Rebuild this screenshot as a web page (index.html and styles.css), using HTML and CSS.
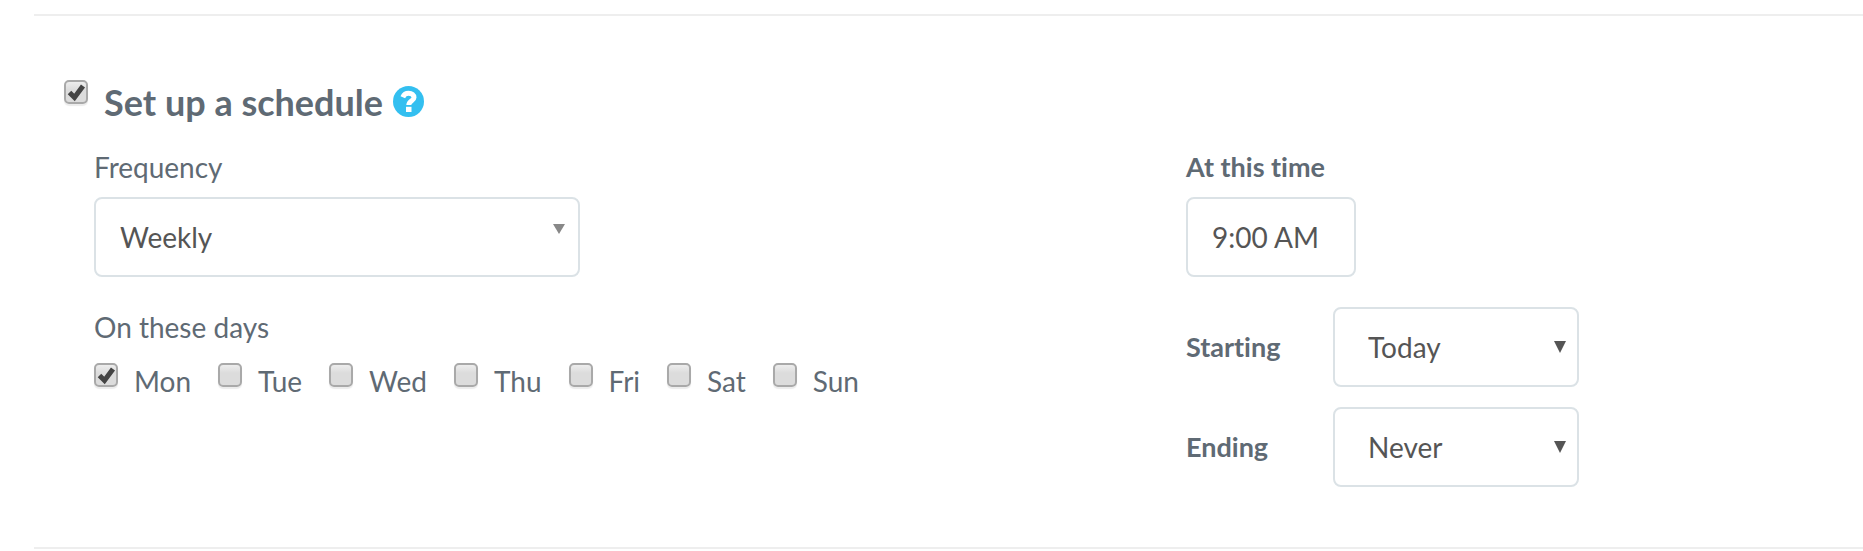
FILE: index.html
```
<!DOCTYPE html>
<html lang="en">
<head>
    <meta charset="utf-8">
    <title>Schedule</title>
    <link rel="stylesheet" href="styles.css">
</head>
<body>
    <form class="schedule">
        <div class="schedule-header">
            <input type="checkbox" id="enableSchedule" checked>
            <h2><label for="enableSchedule">Set up a schedule</label></h2>
            <button type="button" class="help-btn" aria-label="Help">
                <svg viewBox="0 0 31 31" aria-hidden="true">
                    <circle cx="15.5" cy="15.5" r="15.5" fill="#33bff0"/>
                    <path d="M9.800 11.200C11 8.400 12.800 7.300 15.600 7.300C18.900 7.300 21 9 21 11.500C21 14.700 15.800 14.800 15.800 19" fill="none" stroke="#fff" stroke-width="5"/>
                    <rect x="13" y="20.800" width="5.500" height="5.200" fill="#fff"/>
                </svg>
            </button>
        </div>

        <div class="schedule-body">
            <div class="col">
                <div class="field">
                    <label for="frequency">Frequency</label>
                    <select id="frequency" class="control frequency">
                        <option>Daily</option>
                        <option selected>Weekly</option>
                        <option>Monthly</option>
                    </select>
                </div>
                <fieldset class="field">
                    <legend>On these days</legend>
                    <div class="days">
                        <label><input type="checkbox" name="day" checked>Mon</label>
                        <label><input type="checkbox" name="day">Tue</label>
                        <label><input type="checkbox" name="day">Wed</label>
                        <label><input type="checkbox" name="day">Thu</label>
                        <label><input type="checkbox" name="day">Fri</label>
                        <label><input type="checkbox" name="day">Sat</label>
                        <label><input type="checkbox" name="day">Sun</label>
                    </div>
                </fieldset>
            </div>

            <div class="col col-time">
                <div class="field">
                    <label for="time">At this time</label>
                    <input type="text" id="time" class="control time" value="9:00 AM">
                </div>
                <div class="field-row">
                    <label for="starting">Starting</label>
                    <select id="starting" class="control range">
                        <option>Today</option>
                        <option>On date</option>
                    </select>
                </div>
                <div class="field-row">
                    <label for="ending">Ending</label>
                    <select id="ending" class="control range">
                        <option>Never</option>
                        <option>On date</option>
                    </select>
                </div>
            </div>
        </div>
    </form>
</body>
</html>
```
FILE: styles.css
```
* {
    box-sizing: border-box;
}
body {
    margin: 0;
    padding: 14px 0 0 34px;
    background: #fff;
    color: #5f6a74;
    font-family: Lato, "Liberation Sans", sans-serif;
    font-size: 28px;
    font-variant-ligatures: none;
    line-height: 36px;
}
.schedule {
    border-top: 2px solid #eee;
    border-bottom: 2px solid #eee;
    padding: 62px 0 60px 30px;
}
.schedule-header {
    display: flex;
    align-items: flex-start;
    padding-top: 2px;
}
.schedule-header h2 {
    margin: 0 10px 0 16px;
    font-size: 36px;
    font-weight: 700;
    line-height: 44px;
}
.help-btn {
    width: 31px;
    height: 31px;
    margin-top: 6px;
    padding: 0;
    border: none;
    background: none;
    cursor: pointer;
}
.help-btn svg {
    display: block;
}
.schedule-body {
    display: grid;
    grid-template-columns: 1092fr 677fr;
    padding: 25px 0 0 30px;
}
.field {
    display: flex;
    flex-direction: column;
    align-items: flex-start;
    gap: 12px;
    margin: 0 0 30px;
    padding: 0;
    border: none;
}
.col .field + .field {
    margin-top: 32px;
}
legend {
    padding: 0;
}
.field-row {
    display: flex;
    align-items: center;
    margin-bottom: 20px;
}
.field-row:last-child {
    margin-bottom: 0;
}
.field-row label {
    width: 147px;
}
.col-time label {
    font-size: 27px;
    font-weight: 700;
}
.control {
    height: 80px;
    border: 2px solid #dbe2e6;
    border-radius: 8px;
    background-color: #fff;
    color: #555;
    font: inherit;
    padding: 0 24px;
}
select.control {
    appearance: none;
    background-repeat: no-repeat;
}
.frequency {
    width: 486px;
    background-image: url("data:image/svg+xml,%3Csvg xmlns='http://www.w3.org/2000/svg' width='12' height='10'%3E%3Cpath d='M0 0h12L6 10z' fill='%23888'/%3E%3C/svg%3E");
    background-position: right 13px top 25px;
}
.time {
    width: 170px;
}
.range {
    width: 246px;
    padding-left: 33px;
    background-image: url("data:image/svg+xml,%3Csvg xmlns='http://www.w3.org/2000/svg' width='12' height='12'%3E%3Cpath d='M0 0h12L6 12z' fill='%23555'/%3E%3C/svg%3E");
    background-position: right 11px top 32px;
}
.days {
    display: flex;
    flex-wrap: wrap;
    gap: 27px;
    padding-top: 18px;
}
.days label {
    display: flex;
    align-items: flex-start;
    gap: 16px;
}
input[type="checkbox"] {
    appearance: none;
    flex: none;
    width: 24px;
    height: 24px;
    margin: 0;
    border: 2px solid #a9a9a9;
    border-radius: 5px;
    background: linear-gradient(#ededed, #dcdcdc 40%);
    box-shadow: 0 2px 1px #ececec;
}
input[type="checkbox"]:checked {
    background: url("data:image/svg+xml,%3Csvg xmlns='http://www.w3.org/2000/svg' width='20' height='20'%3E%3Cpath d='M3.5 10.500l5 5L17 4' fill='none' stroke='%23444' stroke-width='5'/%3E%3C/svg%3E") center no-repeat, linear-gradient(#ededed, #dcdcdc 40%);
}
```
